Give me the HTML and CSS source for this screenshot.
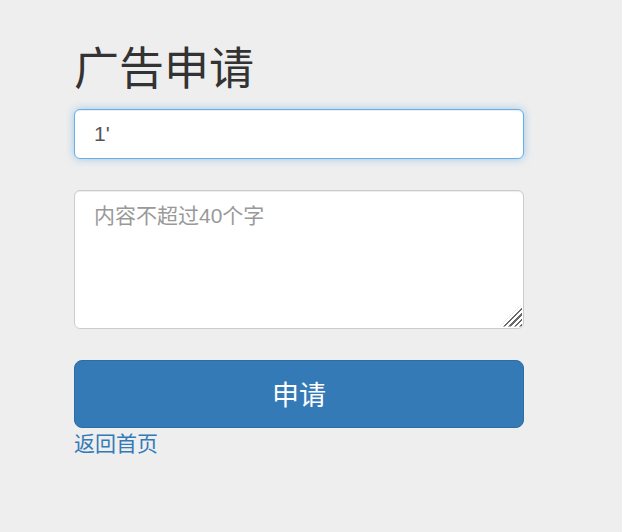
FILE: index.html
```html
<!DOCTYPE html>
<html lang="zh-CN">
<head>
    <meta charset="UTF-8">
    <title>广告申请</title>
    <link rel="stylesheet" href="styles.css">
</head>
<body>
    <div class="container">
        <h1>广告申请</h1>
        <form>
            <input type="text" class="form-control title-input" value="1'">
            <div class="textarea-wrap">
                <textarea class="form-control content-input" placeholder="内容不超过40个字"></textarea>
            </div>
            <button type="submit" class="btn-submit">申请</button>
        </form>
        <a href="#" class="back-link">返回首页</a>
    </div>
</body>
</html>
```

FILE: styles.css
```css
body {
    font-family: "Liberation Sans", Arial, "Noto Sans CJK SC", sans-serif;
    background-color: #eeeeee;
    color: #333;
    margin: 0;
}

.container {
    width: 450px;
    padding: 45px 0 0 74px;
}

h1 {
    font-size: 45px;
    font-weight: 400;
    line-height: 1.1;
    margin: 0 0 14px;
    color: #333;
}

.form-control {
    display: block;
    width: 100%;
    box-sizing: border-box;
    font-family: inherit;
    font-size: 21px;
    color: #555;
    background-color: #fff;
    border: 1px solid #ccc;
    border-radius: 6px;
    padding: 10px 19px;
    margin-bottom: 31px;
    outline: none;
    box-shadow: inset 0 1px 1px rgba(0, 0, 0, 0.075);
}

.title-input {
    height: 50px;
    border-color: #66afe9;
    box-shadow: inset 0 1px 1px rgba(0, 0, 0, 0.075), 0 0 8px rgba(102, 175, 233, 0.6);
}

.textarea-wrap {
    position: relative;
}

/* resize grip drawn over the corner */
.textarea-wrap::after {
    content: "";
    position: absolute;
    right: 2px;
    bottom: 2px;
    width: 22px;
    height: 22px;
    background: repeating-linear-gradient(135deg, transparent 0, transparent 2.2px, #6a6a6a 2.2px, #6a6a6a 3.8px);
    clip-path: polygon(100% 0, 100% 100%, 0 100%);
    pointer-events: none;
}

.content-input {
    height: 139px;
    line-height: 1.3;
    padding-top: 11px;
    resize: none;
}

.content-input::placeholder {
    color: #999;
}

.btn-submit {
    display: block;
    width: 100%;
    height: 68px;
    font-family: inherit;
    font-size: 27px;
    color: #fff;
    background-color: #337ab7;
    border: 1px solid #2e6da4;
    border-radius: 8px;
    cursor: pointer;
}

.back-link {
    display: inline-block;
    margin-top: -1px;
    font-size: 21px;
    color: #337ab7;
    text-decoration: none;
}
```
